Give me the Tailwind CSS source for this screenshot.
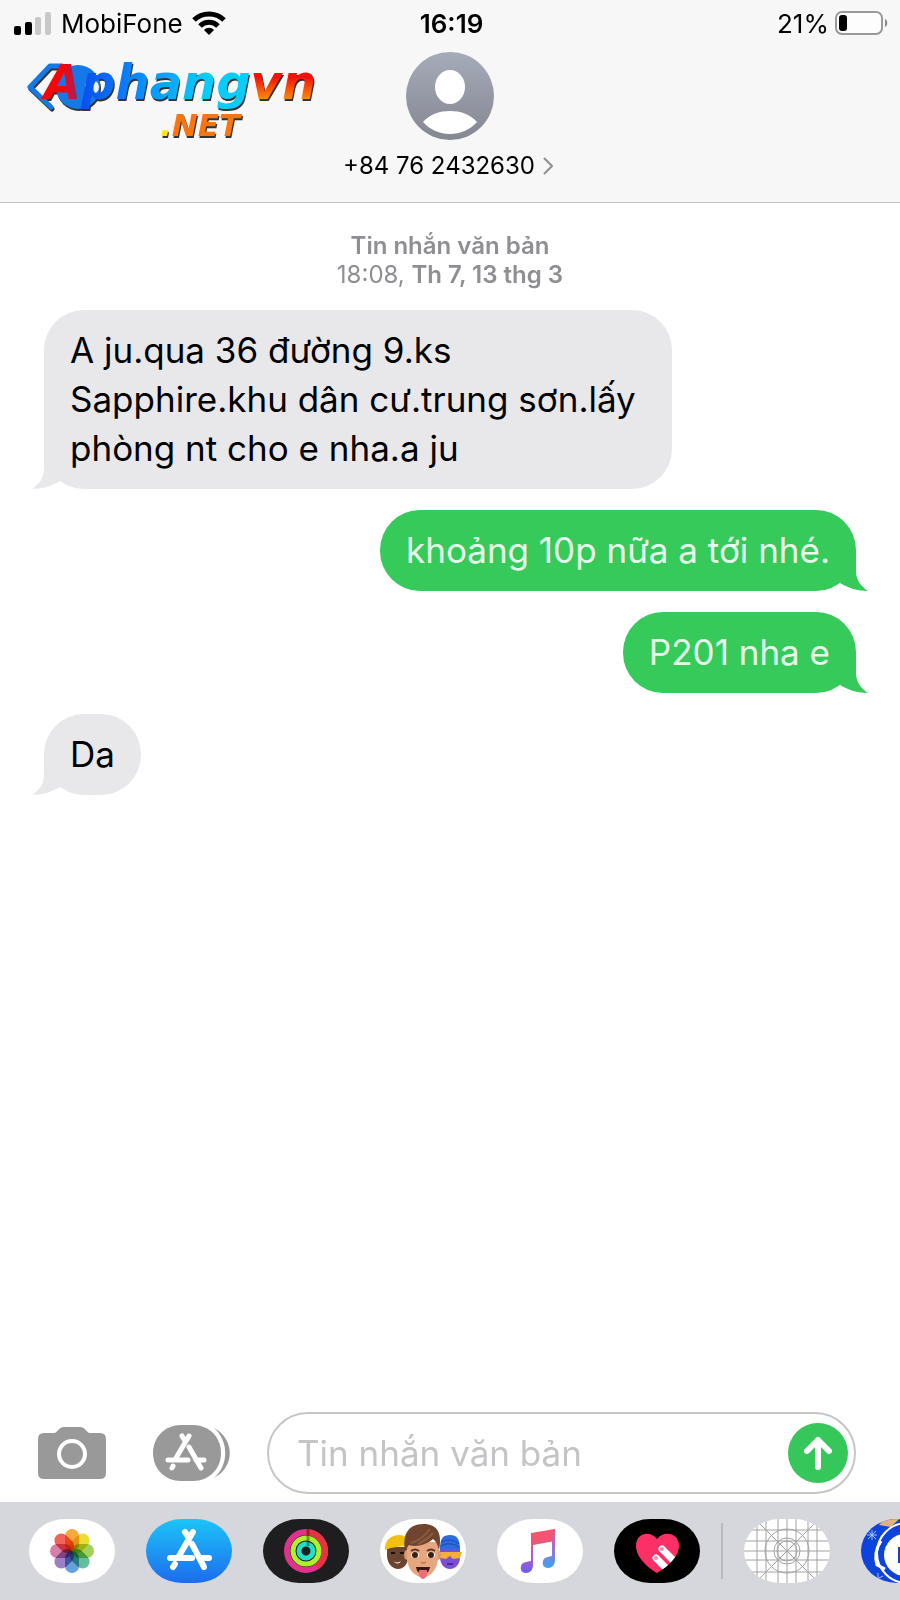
<!DOCTYPE html>
<html lang="vi">
<head>
  <meta charset="UTF-8">
  <meta name="viewport" content="width=device-width, initial-scale=1.0">
  <title>Tin nhắn</title>
  <script src="https://cdn.jsdelivr.net/npm/@tailwindcss/browser@4"></script>
</head>
<body class="flex min-h-screen flex-col overflow-x-hidden bg-white font-['Inter','Noto_Sans',sans-serif] text-black">
  <header class="relative border-b border-[#c4c4c6] bg-[#f7f7f7] pb-5">
    <!-- Status bar -->
    <div class="grid h-[46px] grid-cols-3 items-center pr-[11px] pl-[14px] text-[26px]">
      <div class="flex items-center gap-[9px]">
        <svg class="h-6 w-[38px]" viewBox="0 0 38 24" aria-hidden="true">
          <rect x="0" y="15" width="7" height="9" rx="2" />
          <rect x="11" y="11" width="7" height="13" rx="2" />
          <rect x="21" y="6" width="6" height="18" rx="2" fill="#c8c8c8" />
          <rect x="31" y="1" width="6" height="23" rx="2" fill="#c8c8c8" />
        </svg>
        <span>MobiFone</span>
        <svg class="h-6 w-[34px]" viewBox="0 0 34 24" aria-label="Wi-Fi">
          <g fill="none" stroke="#000" stroke-width="5">
            <path d="M2 9C10 1 24 1 32 9" />
            <path d="M8 15C13 10 21 10 26 15" />
          </g>
          <path d="M12 19C15 16 19 16 22 19L17 24Z" />
        </svg>
      </div>
      <span class="text-center font-semibold">16:19</span>
      <div class="flex items-center justify-end gap-[6px]">
        <span>21%</span>
        <svg class="h-[26px] w-[54px]" viewBox="0 0 54 26" aria-label="Pin">
          <rect x="1" y="2" width="46" height="22" rx="6" fill="#fdfdfd" stroke="#999" stroke-width="2" />
          <rect x="4" y="5" width="8" height="16" rx="3" />
          <path d="M50 9C53 10 53 16 50 17Z" fill="#8a8a8a" />
        </svg>
      </div>
    </div>

    <!-- Contact -->
    <div class="flex flex-col items-center gap-[10px] pt-[6px]">
      <svg class="size-[88px]" viewBox="0 0 88 88" aria-hidden="true">
        <defs>
          <linearGradient id="avatar" x2="0" y2="1">
            <stop stop-color="#a5abb9" />
            <stop offset="1" stop-color="#858791" />
          </linearGradient>
        </defs>
        <circle cx="44" cy="44" r="44" fill="url(#avatar)" />
        <ellipse cx="44" cy="35" rx="15" ry="17" fill="#fff" />
        <path d="M17 70C24 62 34 59 44 59S64 62 71 70C64 78 54 82 44 82S24 78 17 70Z" fill="#fff" />
      </svg>
      <button type="button" class="flex items-center gap-2 pr-1 text-2xl leading-8">
        <span>+84 76 2432630</span>
        <svg class="h-[18px] w-[10px]" viewBox="0 0 10 18" fill="none" stroke="#8e8e93" stroke-width="2" aria-hidden="true">
          <path d="M1 1L9 9L1 17" />
        </svg>
      </button>
    </div>

    <!-- Site logo over the header -->
    <svg class="absolute top-[52px] left-[26px] h-[96px] w-[304px] overflow-visible drop-shadow-[1px_2px_0_#333]" viewBox="0 0 304 96" font-family="'DejaVu Sans', sans-serif" font-style="italic" font-weight="700">
      <defs>
        <linearGradient id="logoA" gradientUnits="userSpaceOnUse" x1="18" y1="0" x2="56" y2="0">
          <stop offset=".5" stop-color="#f80508" />
          <stop offset="1" stop-color="#8a2a78" />
        </linearGradient>
        <linearGradient id="logoP" gradientUnits="userSpaceOnUse" x1="54" y1="0" x2="222" y2="0">
          <stop stop-color="#0a4cf0" />
          <stop offset=".4" stop-color="#0a93fb" />
          <stop offset=".75" stop-color="#08cdfb" />
        </linearGradient>
        <linearGradient id="logoV" gradientUnits="userSpaceOnUse" x1="0" y1="20" x2="0" y2="47">
          <stop offset=".2" stop-color="#f41208" />
          <stop offset="1" stop-color="#ff8a08" />
        </linearGradient>
      </defs>
      <path d="M36 14H24L4 35L25 55" fill="none" stroke="#1478e8" stroke-width="5" stroke-linecap="round" stroke-linejoin="round" />
      <circle cx="52" cy="35" r="22" fill="#1478e8" />
      <circle cx="66" cy="35" r="7" fill="#e8f2fc" />
      <text x="18" y="47" font-size="48" fill="url(#logoA)">A<tspan fill="url(#logoP)">phang</tspan><tspan fill="url(#logoV)">vn</tspan></text>
      <text x="134" y="84" font-size="31" fill="#ffe60a">.<tspan fill="#fa7510">NET</tspan></text>
    </svg>
  </header>

  <main class="flex flex-1 flex-col gap-[21px] px-[44px] pt-[28px]">
    <div class="text-center text-2xl leading-[29px] text-[#8e8e93]">
      <p class="font-semibold">Tin nhắn văn bản</p>
      <p>18:08, <span class="font-semibold">Th 7, 13 thg 3</span></p>
    </div>

    <div class="relative max-w-[628px] self-start rounded-[40px] bg-[#e8e8ea] px-[26px] py-4 text-[35px] leading-[49px]">
      <p>A ju.qua 36 đường 9.ks Sapphire.khu dân cư.trung sơn.lấy phòng nt cho e nha.a ju</p>
      <svg class="absolute bottom-0 -left-3 h-10 w-7" viewBox="0 0 28 40" fill="#e8e8ea" aria-hidden="true">
        <path d="M12 0V20C12 30 6 36 0 40C10 40 20 37 28 32Z" />
      </svg>
    </div>

    <div class="relative max-w-[628px] self-end rounded-[40px] bg-[#36ca5b] px-[26px] py-4 text-[35px] leading-[49px] text-[#e6fbea]">
      <p>khoảng 10p nữa a tới nhé.</p>
      <svg class="absolute -right-3 bottom-0 h-10 w-7" viewBox="0 0 28 40" fill="#36ca5b" aria-hidden="true">
        <path d="M16 0V20C16 30 22 36 28 40C18 40 8 37 0 32Z" />
      </svg>
    </div>

    <div class="relative max-w-[628px] self-end rounded-[40px] bg-[#36ca5b] px-[26px] py-4 text-[35px] leading-[49px] text-[#e6fbea]">
      <p>P201 nha e</p>
      <svg class="absolute -right-3 bottom-0 h-10 w-7" viewBox="0 0 28 40" fill="#36ca5b" aria-hidden="true">
        <path d="M16 0V20C16 30 22 36 28 40C18 40 8 37 0 32Z" />
      </svg>
    </div>

    <div class="relative max-w-[628px] self-start rounded-[40px] bg-[#e8e8ea] px-[26px] py-4 text-[35px] leading-[49px]">
      <p>Da</p>
      <svg class="absolute bottom-0 -left-3 h-10 w-7" viewBox="0 0 28 40" fill="#e8e8ea" aria-hidden="true">
        <path d="M12 0V20C12 30 6 36 0 40C10 40 20 37 28 32Z" />
      </svg>
    </div>
  </main>

  <!-- Composer -->
  <form class="flex items-center pr-[44px] pb-2 pl-[38px]">
    <button type="button" aria-label="Máy ảnh">
      <svg class="h-[52px] w-[68px]" viewBox="0 0 68 52">
        <path d="M6 6H16C20 6 20 0 26 0H42C48 0 48 6 52 6H62Q68 6 68 12V46Q68 52 62 52H6Q0 52 0 46V12Q0 6 6 6Z" fill="#999" />
        <circle cx="34" cy="27" r="13" fill="none" stroke="#fff" stroke-width="4" />
      </svg>
    </button>
    <button type="button" class="ml-[47px]" aria-label="Ứng dụng">
      <svg class="h-[56px] w-[77px]" viewBox="0 0 77 56" fill="none" stroke-linecap="round">
        <path d="M28 0H40C56 0 68 12 68 28S56 56 40 56H28C12 56 0 44 0 28S12 0 28 0Z" fill="#999" />
        <path d="M61 3C82 14 82 42 61 53C76 40 76 16 61 3Z" fill="#999" />
        <g stroke="#fff" stroke-width="5">
          <path d="M36 11L23 33M29 11L32 16M15 35H35M43 35H51M36 22L48 43M20 41L19 43" />
        </g>
      </svg>
    </button>
    <div class="ml-[37px] flex h-[82px] min-w-0 flex-1 items-center rounded-full border-2 border-[#c6c6c8] pr-[6px] pl-7">
      <input type="text" aria-label="Tin nhắn văn bản" placeholder="Tin nhắn văn bản" class="h-[60px] min-w-0 flex-1 text-[35px] outline-none placeholder:text-[#c4c4c6]">
      <button type="submit" aria-label="Gửi">
        <svg class="size-[60px]" viewBox="0 0 60 60" fill="none">
          <circle cx="30" cy="30" r="30" fill="#36c75a" />
          <path d="M30 44V17M19 28L30 17L41 28" stroke="#fff" stroke-width="6" stroke-linecap="round" stroke-linejoin="round" />
        </svg>
      </button>
    </div>
  </form>

  <!-- App drawer -->
  <nav class="flex h-[98px] items-center gap-[31px] overflow-hidden bg-[#d6d7dc] pl-[29px]" aria-label="Ứng dụng iMessage">
    <button type="button" class="shrink-0" aria-label="Ảnh">
      <svg class="h-16 w-[86px]" viewBox="0 0 86 64">
        <rect width="86" height="64" rx="36" ry="32" fill="#fff" />
        <g class="mix-blend-multiply" fill-opacity=".85">
          <rect class="mix-blend-multiply" x="36" y="10" width="14" height="22" rx="7" fill="#f79a1c" />
          <rect class="mix-blend-multiply" x="36" y="10" width="14" height="22" rx="7" fill="#e6d80c" transform="rotate(45 43 32)" />
          <rect class="mix-blend-multiply" x="36" y="10" width="14" height="22" rx="7" fill="#95c83e" transform="rotate(90 43 32)" />
          <rect class="mix-blend-multiply" x="36" y="10" width="14" height="22" rx="7" fill="#48b48a" transform="rotate(135 43 32)" />
          <rect class="mix-blend-multiply" x="36" y="10" width="14" height="22" rx="7" fill="#4a90d6" transform="rotate(180 43 32)" />
          <rect class="mix-blend-multiply" x="36" y="10" width="14" height="22" rx="7" fill="#8a6ab8" transform="rotate(225 43 32)" />
          <rect class="mix-blend-multiply" x="36" y="10" width="14" height="22" rx="7" fill="#cf6a9a" transform="rotate(270 43 32)" />
          <rect class="mix-blend-multiply" x="36" y="10" width="14" height="22" rx="7" fill="#ec4a3c" transform="rotate(315 43 32)" />
        </g>
      </svg>
    </button>
    <button type="button" class="shrink-0" aria-label="App Store">
      <svg class="h-16 w-[86px]" viewBox="0 0 86 64">
        <defs>
          <linearGradient id="store" x2="0" y2="1">
            <stop stop-color="#1cc4f8" />
            <stop offset="1" stop-color="#1d6cee" />
          </linearGradient>
        </defs>
        <rect width="86" height="64" rx="36" ry="32" fill="url(#store)" />
        <path d="M47 13L33 37M39 13L43 19M24 39H46M55 39H63M46 25L58 48M29 45L27 48" fill="none" stroke="#fff" stroke-width="6" stroke-linecap="round" />
      </svg>
    </button>
    <button type="button" class="shrink-0" aria-label="Hoạt động">
      <svg class="h-16 w-[86px]" viewBox="0 0 86 64" fill="none">
        <rect width="86" height="64" rx="36" ry="32" fill="#1e1e20" />
        <circle cx="43" cy="32" r="19" stroke="#e0328c" stroke-width="6" />
        <path d="M43 13A19 19 0 0 1 54 47.500" stroke="#ea3340" stroke-width="6" />
        <circle cx="43" cy="32" r="13" stroke="#aef02c" stroke-width="5" />
        <circle cx="43" cy="32" r="7" stroke="#22e0c4" stroke-width="5" />
        <path d="M45 10V27" stroke="#000" stroke-opacity=".35" stroke-width="3" />
      </svg>
    </button>
    <button type="button" class="shrink-0" aria-label="Memoji">
      <svg class="h-16 w-[86px]" viewBox="0 0 86 64">
        <rect width="86" height="64" rx="36" ry="32" fill="#fff" />
        <!-- left head -->
        <path d="M7 28H28V38C28 46 23 50 18 50S7 45 7 36Z" fill="#6b4430" />
        <path d="M5 31C4 21 12 16 19 16S29 20 29 27C22 27 12 28 5 31Z" fill="#f2c010" />
        <path d="M13 42Q17 45 21 42Q18 47 13 42Z" fill="#fff" />
        <path d="M11 34H15M20 34H24" stroke="#1b0f0a" stroke-width="2" />
        <!-- right head -->
        <path d="M60 27H80V38C80 46 75 50 70 50S60 46 60 38Z" fill="#7a4fd6" />
        <path d="M60 30C60 19 63 16 70 16C77 16 80 20 80 31Z" fill="#2e6be0" />
        <path d="M61 23Q70 18 79 25M61 27Q70 22 79 28" fill="none" stroke="#174bb0" />
        <path d="M60 33L82 33L80 39L73 40L70 37L66 40L60 39Z" fill="#f4ae3a" />
        <path d="M67 45H73" stroke="#4b2aa0" stroke-width="2" />
        <!-- front head -->
        <ellipse cx="27" cy="36" rx="3" ry="5" fill="#d9966f" />
        <ellipse cx="58" cy="36" rx="3" ry="5" fill="#d9966f" />
        <path d="M27 23H58V38C58 50 51 57 43 59C34 57 27 50 27 38Z" fill="#e5a680" />
        <path d="M25 31C22 14 30 5 43 5S63 12 59 32C58 27 57 23 53 20C45 27 35 28 29 26C27 28 27 30 25 31Z" fill="#70452f" />
        <path d="M31 24Q43 20 50 10M38 25Q48 20 53 14" fill="none" stroke="#8d5c3f" stroke-width="2" />
        <path d="M31 32Q35 29 39 32M47 32Q51 29 55 32" fill="none" stroke="#5f3825" stroke-width="2" />
        <ellipse cx="35" cy="36" rx="4" ry="3" fill="#fff" />
        <ellipse cx="51" cy="36" rx="4" ry="3" fill="#fff" />
        <circle cx="35" cy="36" r="3" fill="#3a2012" />
        <circle cx="51" cy="36" r="3" fill="#3a2012" />
        <path d="M41 43Q43 45 46 43" fill="none" stroke="#c77f58" stroke-width="2" />
        <path d="M36 48H50Q49 55 43 55T36 48Z" fill="#3b1512" />
        <path d="M39 51H47V56Q43 64 39 56Z" fill="#ee6d78" />
      </svg>
    </button>
    <button type="button" class="shrink-0" aria-label="Nhạc">
      <svg class="h-16 w-[86px]" viewBox="0 0 86 64">
        <defs>
          <linearGradient id="music" x1="0" y1="0" x2="0" y2="1">
            <stop offset=".25" stop-color="#f2566e" />
            <stop offset=".6" stop-color="#b35fc0" />
            <stop offset="1" stop-color="#6a5cf0" />
          </linearGradient>
          <linearGradient id="music2" x1="0" y1="0" x2="0" y2="1">
            <stop stop-color="#f2566e" />
            <stop offset=".5" stop-color="#a070d0" />
            <stop offset="1" stop-color="#3aa2f4" />
          </linearGradient>
        </defs>
        <rect width="86" height="64" rx="36" ry="32" fill="#fff" />
        <path d="M34 14L58 10V22L36 26V46C36 51 33 54 29 54C25 54 23 51 24 47C25 43 29 43 34 42Z" fill="url(#music)" />
        <path d="M55 11L58 10V41C58 46 55 49 51 49C47 49 45 46 46 42C47 38 51 38 55 37Z" fill="url(#music2)" />
      </svg>
    </button>
    <button type="button" class="shrink-0" aria-label="Digital Touch">
      <svg class="h-16 w-[86px]" viewBox="0 0 86 64">
        <defs>
          <clipPath id="heart">
            <path d="M43 54C34 49 22 38 22 27C22 14 36 11 43 20C50 11 65 14 65 27C65 38 52 49 43 54Z" />
          </clipPath>
        </defs>
        <rect width="86" height="64" rx="36" ry="32" fill="#000" />
        <g clip-path="url(#heart)">
          <rect x="20" y="10" width="48" height="48" fill="#fc2f66" />
          <path d="M48 30L68 50M42 39L60 57" stroke="#fff" stroke-width="7" stroke-linecap="round" />
          <circle cx="48" cy="30" r="2" fill="#f78aa8" />
          <circle cx="42" cy="39" r="2" fill="#f78aa8" />
        </g>
      </svg>
    </button>
    <div class="-mx-[10px] h-14 w-[2px] shrink-0 bg-[#b9babf]"></div>
    <button type="button" class="shrink-0" aria-label="Ứng dụng mẫu">
      <svg class="h-16 w-[86px]" viewBox="0 0 86 64">
        <defs>
          <clipPath id="pill"><rect width="86" height="64" rx="36" ry="32" /></clipPath>
        </defs>
        <g clip-path="url(#pill)" fill="none" stroke="#a2a2a4">
          <rect width="86" height="64" fill="#fff" stroke="none" />
          <path d="M13 0V64M22 0V64M34 0V64M43 0V64M52 0V64M64 0V64M73 0V64M0 11H86M0 22H86M0 32H86M0 41H86M0 53H86M11 0L75 64M75 0L11 64" />
          <circle cx="43" cy="32" r="22" />
          <circle cx="43" cy="32" r="13" />
          <circle cx="43" cy="32" r="10" />
        </g>
      </svg>
    </button>
    <button type="button" class="shrink-0" aria-label="Ứng dụng khác">
      <svg class="h-16 w-[86px]" viewBox="0 0 86 64">
        <g clip-path="url(#pill)">
          <rect width="86" height="64" fill="#0c43dc" />
          <path d="M18 6L24 0H38L30 8Z" fill="#e3b27c" />
          <circle cx="46" cy="34" r="30" fill="none" stroke="#fff" stroke-width="2" />
          <path d="M20 22Q12 34 16 46L24 50" fill="none" stroke="#fff" stroke-width="3" />
          <circle cx="44" cy="36" r="21" fill="#fff" />
          <rect x="37" y="28" width="14" height="16" fill="#0c43dc" />
          <path d="M11 11V21M6 16H16M7 12L15 20M15 12L7 20M17 54V64M12 57L22 62M12 62L22 57" stroke="#a9c4ff" />
        </g>
      </svg>
    </button>
  </nav>
</body>
</html>
